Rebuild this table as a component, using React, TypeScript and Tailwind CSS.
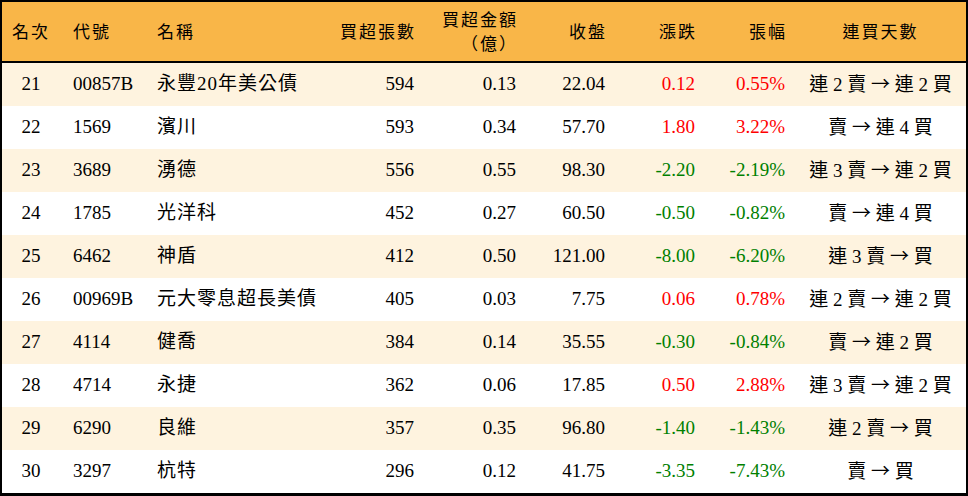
import React from 'react';

type Row = {
  rank: number;
  code: string;
  name: string;
  lots: number;
  amount: string;
  close: string;
  change: string;
  pct: string;
  streak: string;
};

const ROWS: Row[] = [
  { rank: 21, code: '00857B', name: '永豐20年美公債', lots: 594, amount: '0.13', close: '22.04', change: '0.12', pct: '0.55%', streak: '連 2 賣 → 連 2 買' },
  { rank: 22, code: '1569', name: '濱川', lots: 593, amount: '0.34', close: '57.70', change: '1.80', pct: '3.22%', streak: '賣 → 連 4 買' },
  { rank: 23, code: '3689', name: '湧德', lots: 556, amount: '0.55', close: '98.30', change: '-2.20', pct: '-2.19%', streak: '連 3 賣 → 連 2 買' },
  { rank: 24, code: '1785', name: '光洋科', lots: 452, amount: '0.27', close: '60.50', change: '-0.50', pct: '-0.82%', streak: '賣 → 連 4 買' },
  { rank: 25, code: '6462', name: '神盾', lots: 412, amount: '0.50', close: '121.00', change: '-8.00', pct: '-6.20%', streak: '連 3 賣 → 買' },
  { rank: 26, code: '00969B', name: '元大零息超長美債', lots: 405, amount: '0.03', close: '7.75', change: '0.06', pct: '0.78%', streak: '連 2 賣 → 連 2 買' },
  { rank: 27, code: '4114', name: '健喬', lots: 384, amount: '0.14', close: '35.55', change: '-0.30', pct: '-0.84%', streak: '賣 → 連 2 買' },
  { rank: 28, code: '4714', name: '永捷', lots: 362, amount: '0.06', close: '17.85', change: '0.50', pct: '2.88%', streak: '連 3 賣 → 連 2 買' },
  { rank: 29, code: '6290', name: '良維', lots: 357, amount: '0.35', close: '96.80', change: '-1.40', pct: '-1.43%', streak: '連 2 賣 → 買' },
  { rank: 30, code: '3297', name: '杭特', lots: 296, amount: '0.12', close: '41.75', change: '-3.35', pct: '-7.43%', streak: '賣 → 買' },
];

const GRID = 'grid grid-cols-[58px_90px_180px_94px_102px_89px_90px_90px_171px]';

function Streak({ text }: { text: string }) {
  const [left, right] = text.split(' → ');
  return (
    <div className="text-center whitespace-pre">
      {left}{' '}
      <span style={{ fontFamily: '"Noto Sans CJK TC", sans-serif' }}>→</span>
      {' '}{right}
    </div>
  );
}

export default function App() {
  return (
    <div
      className="w-[968px] h-[496px] bg-black pt-[2px] px-[2px] pb-[3px] text-black"
      style={{ fontFamily: '"Liberation Serif", "Noto Sans CJK TC", serif' }}
    >
      <div className={`${GRID} h-[59px] items-center bg-[#f9b648] text-[17px] tracking-[2px] pt-[2px]`}>
        <div className="text-center">名次</div>
        <div className="pl-[13px]">代號</div>
        <div className="pl-[7px]">名稱</div>
        <div className="text-right pr-[8px]">買超張數</div>
        <div className="text-right pr-[8px] leading-[24px]">
          買超金額
          <br />
          （億）
        </div>
        <div className="text-right pr-[8px]">收盤</div>
        <div className="text-right pr-[8px]">漲跌</div>
        <div className="text-right pr-[8px]">張幅</div>
        <div className="text-center">連買天數</div>
      </div>
      <div className="h-[2px] bg-black" />
      <div>
        {ROWS.map((r, i) => {
          const up = !r.change.startsWith('-');
          const tone = up ? 'text-[#ff0000]' : 'text-[#008000]';
          return (
            <div
              key={r.rank}
              className={`${GRID} h-[43px] items-center text-[19px] ${i % 2 === 0 ? 'bg-[#fef3df]' : 'bg-white'}`}
            >
              <div className="text-center">{r.rank}</div>
              <div className="pl-[13px]">{r.code}</div>
              <div className="pl-[7px] tracking-[1px]">{r.name}</div>
              <div className="text-right pr-[10px]">{r.lots}</div>
              <div className="text-right pr-[10px]">{r.amount}</div>
              <div className="text-right pr-[10px]">{r.close}</div>
              <div className={`text-right pr-[10px] ${tone}`}>{r.change}</div>
              <div className={`text-right pr-[10px] ${tone}`}>{r.pct}</div>
              <Streak text={r.streak} />
            </div>
          );
        })}
      </div>
    </div>
  );
}
